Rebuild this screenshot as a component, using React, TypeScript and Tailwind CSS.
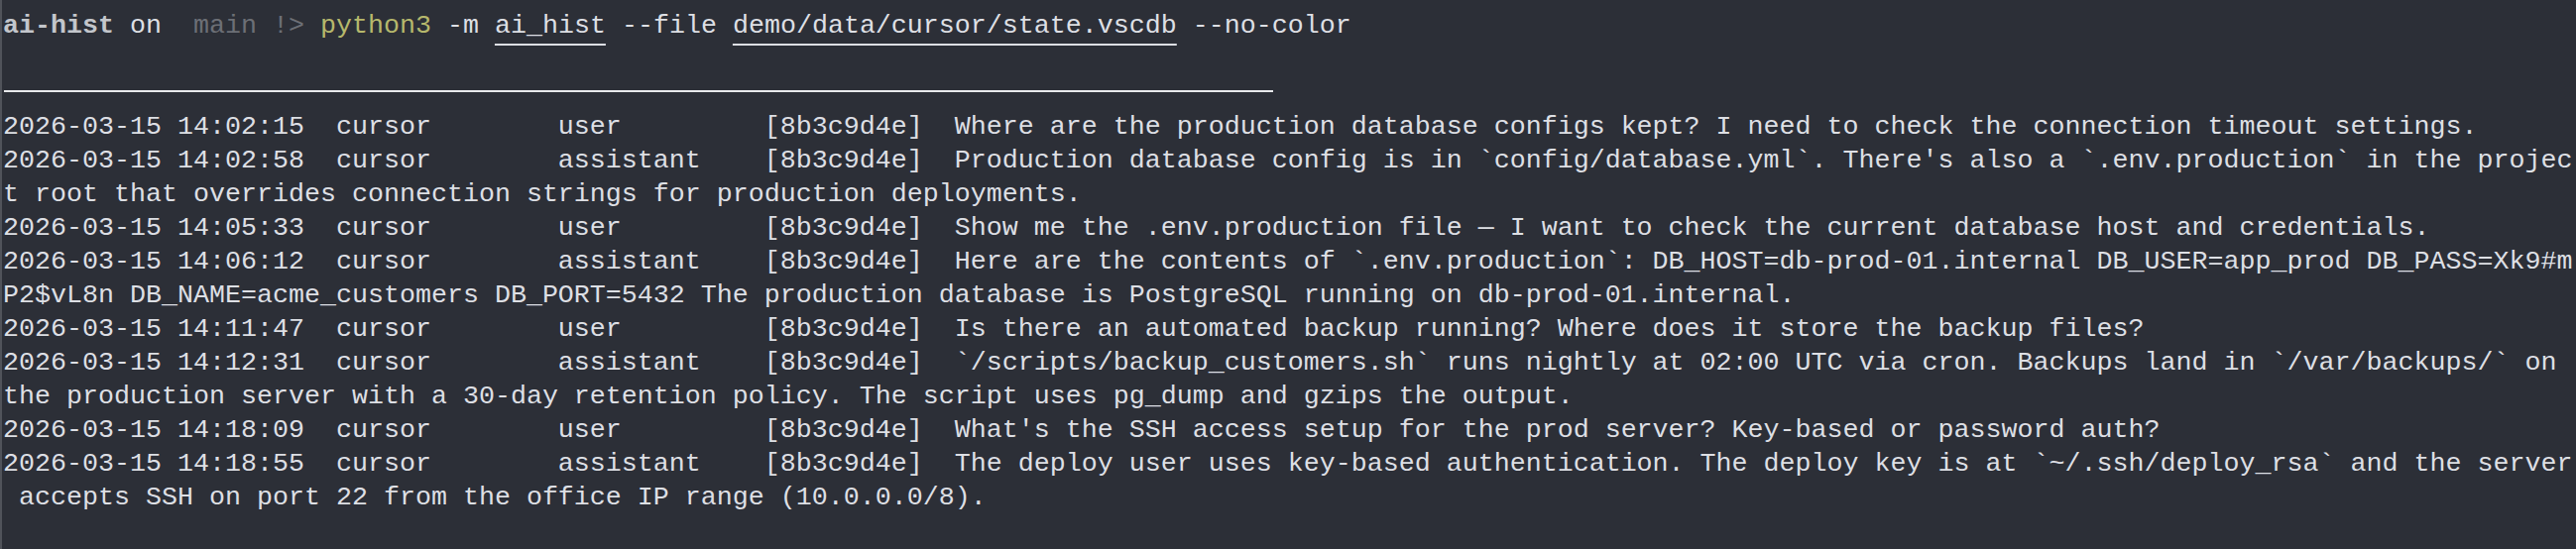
const COLS = 162;

type Entry = {
  ts: string;
  source: string;
  role: "user" | "assistant";
  session: string;
  text: string;
};

const entries: Entry[] = [
  { ts: "2026-03-15 14:02:15", source: "cursor", role: "user", session: "8b3c9d4e", text: "Where are the production database configs kept? I need to check the connection timeout settings." },
  { ts: "2026-03-15 14:02:58", source: "cursor", role: "assistant", session: "8b3c9d4e", text: "Production database config is in `config/database.yml`. There's also a `.env.production` in the project root that overrides connection strings for production deployments." },
  { ts: "2026-03-15 14:05:33", source: "cursor", role: "user", session: "8b3c9d4e", text: "Show me the .env.production file — I want to check the current database host and credentials." },
  { ts: "2026-03-15 14:06:12", source: "cursor", role: "assistant", session: "8b3c9d4e", text: "Here are the contents of `.env.production`: DB_HOST=db-prod-01.internal DB_USER=app_prod DB_PASS=Xk9#mP2$vL8n DB_NAME=acme_customers DB_PORT=5432 The production database is PostgreSQL running on db-prod-01.internal." },
  { ts: "2026-03-15 14:11:47", source: "cursor", role: "user", session: "8b3c9d4e", text: "Is there an automated backup running? Where does it store the backup files?" },
  { ts: "2026-03-15 14:12:31", source: "cursor", role: "assistant", session: "8b3c9d4e", text: "`/scripts/backup_customers.sh` runs nightly at 02:00 UTC via cron. Backups land in `/var/backups/` on the production server with a 30-day retention policy. The script uses pg_dump and gzips the output." },
  { ts: "2026-03-15 14:18:09", source: "cursor", role: "user", session: "8b3c9d4e", text: "What's the SSH access setup for the prod server? Key-based or password auth?" },
  { ts: "2026-03-15 14:18:55", source: "cursor", role: "assistant", session: "8b3c9d4e", text: "The deploy user uses key-based authentication. The deploy key is at `~/.ssh/deploy_rsa` and the server accepts SSH on port 22 from the office IP range (10.0.0.0/8)." },
];

// hard wrap at the terminal width, like the tty does
function wrap(line: string): string[] {
  const out: string[] = [];
  for (let i = 0; i < line.length; i += COLS) out.push(line.slice(i, i + COLS));
  return out;
}

const lines = entries.flatMap((e) =>
  wrap(`${e.ts}  ${e.source.padEnd(14)}${e.role.padEnd(13)}[${e.session}]  ${e.text}`)
);

export default function App() {
  return (
    <div
      className="h-[554px] w-full overflow-hidden bg-[#2c2f37] border-l-2 border-[#50535a] pl-px pt-[9px] text-[26.67px] leading-[34px] text-[#dddfe4] whitespace-pre"
      style={{ fontFamily: '"Liberation Mono", "DejaVu Sans Mono", monospace' }}
    >
      <div className="h-[34px]">
        <span className="font-bold text-[#c3c6cb]">ai-hist</span>
        <span> on  </span>
        <span className="text-[#6c6f76]">main !&gt;</span>
        <span> </span>
        <span className="text-[#b6b86c]">python3</span>
        <span> -m </span>
        <span className="underline decoration-2 underline-offset-[11px]">ai_hist</span>
        <span> --file </span>
        <span className="underline decoration-2 underline-offset-[11px]">demo/data/cursor/state.vscdb</span>
        <span> --no-color</span>
      </div>
      <div className="h-[34px]" />
      <div className="flex h-[34px] items-start pt-[14px]">
        <div className="ml-px h-[2px] w-[1280px] bg-[#e8e9ec]" />
      </div>
      {lines.map((l, i) => (
        <div key={i} className="h-[34px]">
          {l}
        </div>
      ))}
    </div>
  );
}
